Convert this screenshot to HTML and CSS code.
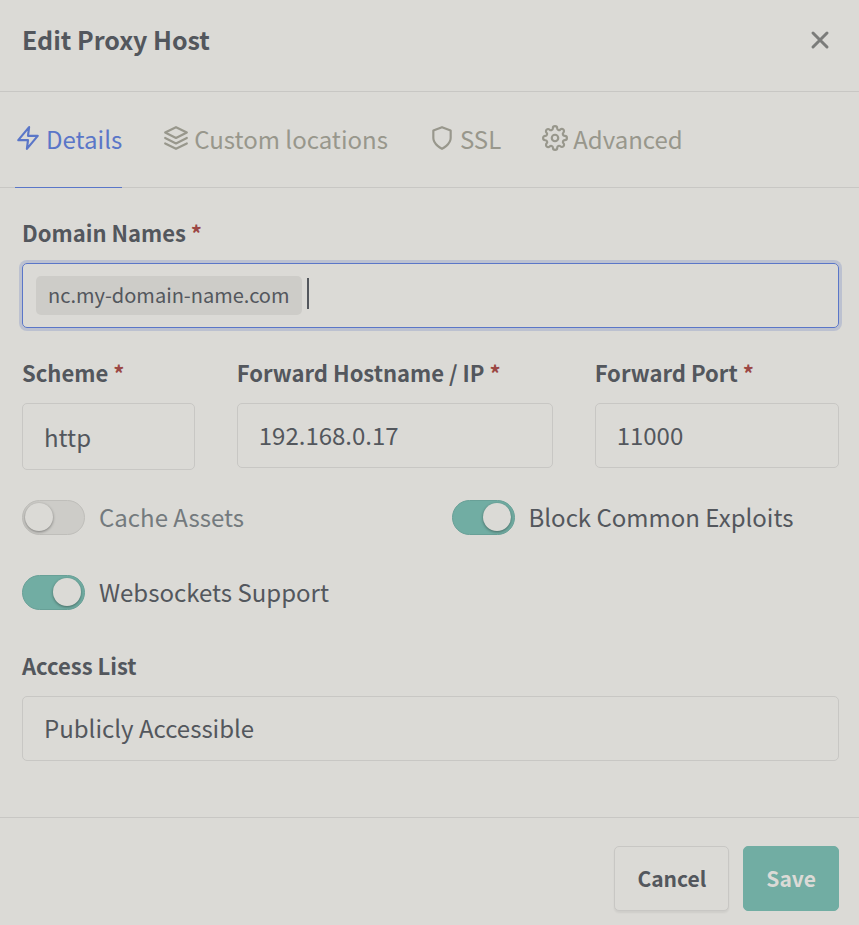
FILE: index.html
```html
<!DOCTYPE html>
<html lang="en">
<head>
  <meta charset="UTF-8">
  <meta name="viewport" content="width=device-width, initial-scale=1.0">
  <title>Edit Proxy Host</title>
  <link rel="stylesheet" href="styles.css">
</head>
<body>
  <form class="modal">
    <header class="modal-header">
      <h1 class="modal-title">Edit Proxy Host</h1>
      <button type="button" class="close" aria-label="Close">
        <svg viewBox="0 0 24 24"><path d="M5 5l14 14M19 5L5 19"/></svg>
      </button>
    </header>

    <nav class="tabs">
      <a href="#details" class="tab active">
        <svg class="icon" viewBox="0 0 24 24"><path d="M13 2L3 14h9l-1 8 10-12h-9l1-8z"/></svg>
        Details
      </a>
      <a href="#locations" class="tab">
        <svg class="icon" viewBox="0 0 24 24"><path d="M12 2L2 7l10 5 10-5-10-5z"/><path d="M2 17l10 5 10-5"/><path d="M2 12l10 5 10-5"/></svg>
        Custom locations
      </a>
      <a href="#ssl" class="tab">
        <svg class="icon" viewBox="0 0 24 24"><path d="M12 22s8-4 8-10V5l-8-3-8 3v7c0 6 8 10 8 10z"/></svg>
        SSL
      </a>
      <a href="#advanced" class="tab">
        <svg class="icon" viewBox="0 0 24 24"><circle cx="12" cy="12" r="3"/><path d="M19.4 15a1.65 1.65 0 0 0 .33 1.82l.06.06a2 2 0 0 1 0 2.83 2 2 0 0 1-2.83 0l-.06-.06a1.65 1.65 0 0 0-1.82-.33 1.65 1.65 0 0 0-1 1.51V21a2 2 0 0 1-2 2 2 2 0 0 1-2-2v-.09A1.65 1.65 0 0 0 9 19.4a1.65 1.65 0 0 0-1.82.33l-.06.06a2 2 0 0 1-2.83 0 2 2 0 0 1 0-2.83l.06-.06a1.65 1.65 0 0 0 .33-1.82 1.65 1.65 0 0 0-1.51-1H3a2 2 0 0 1-2-2 2 2 0 0 1 2-2h.09A1.65 1.65 0 0 0 4.6 9a1.65 1.65 0 0 0-.33-1.82l-.06-.06a2 2 0 0 1 0-2.83 2 2 0 0 1 2.83 0l.06.06a1.65 1.65 0 0 0 1.82.33H9a1.65 1.65 0 0 0 1-1.51V3a2 2 0 0 1 2-2 2 2 0 0 1 2 2v.09a1.65 1.65 0 0 0 1 1.51 1.65 1.65 0 0 0 1.82-.33l.06-.06a2 2 0 0 1 2.83 0 2 2 0 0 1 0 2.83l-.06.06a1.65 1.65 0 0 0-.33 1.82V9a1.65 1.65 0 0 0 1.51 1H21a2 2 0 0 1 2 2 2 2 0 0 1-2 2h-.09a1.65 1.65 0 0 0-1.51 1z"/></svg>
        Advanced
      </a>
    </nav>

    <div class="modal-body">
      <div class="field col-12">
        <label for="domains">Domain Names <span class="required">*</span></label>
        <div class="tag-box">
          <span class="tag">nc.my-domain-name.com</span>
          <input type="text" id="domains" class="tag-input">
        </div>
      </div>

      <div class="field col-3">
        <label for="scheme">Scheme <span class="required">*</span></label>
        <select id="scheme" class="control control-tall">
          <option>http</option>
          <option>https</option>
        </select>
      </div>
      <div class="field col-5">
        <label for="host">Forward Hostname / IP <span class="required">*</span></label>
        <input type="text" id="host" class="control" value="192.168.0.17">
      </div>
      <div class="field col-4">
        <label for="port">Forward Port <span class="required">*</span></label>
        <input type="text" id="port" class="control" value="11000">
      </div>

      <div class="switches col-12">
        <label class="switch">
          <input type="checkbox">
          <span>Cache Assets</span>
        </label>
        <label class="switch">
          <input type="checkbox" checked>
          <span>Block Common Exploits</span>
        </label>
        <label class="switch">
          <input type="checkbox" checked>
          <span>Websockets Support</span>
        </label>
      </div>

      <div class="field col-12">
        <label for="access">Access List</label>
        <select id="access" class="control">
          <option>Publicly Accessible</option>
        </select>
      </div>
    </div>

    <footer class="modal-footer">
      <button type="button" class="btn btn-secondary">Cancel</button>
      <button type="submit" class="btn btn-success">Save</button>
    </footer>
  </form>
</body>
</html>
```
FILE: styles.css
```css
:root {
  --bg: #dbdad6;
  --text: #53575d;
  --muted: #747a7e;
  --border: #c8c7c4;
  --blue: #5a76c8;
  --green: #71ada3;
  --tab: #98978c;
}

* {
  box-sizing: border-box;
  margin: 0;
  padding: 0;
}

body {
  background: var(--bg);
  color: var(--text);
  font-family: "Noto Sans CJK SC", "Noto Sans", sans-serif;
  font-size: 24px;
  line-height: 32px;
}

input,
select,
button {
  font: inherit;
  color: inherit;
}

.modal-header {
  display: flex;
  align-items: center;
  justify-content: space-between;
  padding: 23px 27px 36px 22px;
  border-bottom: 1px solid var(--border);
}

.modal-title {
  font-size: 25px;
  font-weight: 700;
}

.close {
  width: 24px;
  height: 24px;
  border: 0;
  background: none;
  color: #7b7c7a;
  cursor: pointer;
}

.close svg {
  display: block;
  width: 24px;
  height: 26px;
  fill: none;
  stroke: currentColor;
  stroke-width: 3;
  stroke-linecap: round;
}

.tabs {
  display: flex;
  gap: 41px;
  padding: 0 15px;
  border-bottom: 1px solid var(--border);
}

.tab {
  display: flex;
  align-items: center;
  gap: 5px;
  padding: 31px 0 32px;
  margin-bottom: -1px;
  border-bottom: 1px solid transparent;
  color: var(--tab);
  text-decoration: none;
}

.tab.active {
  color: var(--blue);
  border-color: var(--blue);
}

.icon {
  width: 26px;
  height: 26px;
  margin-bottom: 3px;
  fill: none;
  stroke: currentColor;
  stroke-width: 2;
  stroke-linecap: round;
  stroke-linejoin: round;
}

.modal-body {
  display: grid;
  grid-template-columns: repeat(12, 1fr);
  align-items: start;
  gap: 28px 42px;
  padding: 28px 20px 56px 22px;
}

.col-3 { grid-column: span 3; }
.col-4 { grid-column: span 4; }
.col-5 { grid-column: span 5; }
.col-12 { grid-column: span 12; }

.field label {
  display: block;
  margin-bottom: 15px;
  font-size: 22px;
  font-weight: 700;
  white-space: nowrap;
}

.required {
  color: #9b4744;
}

.control {
  display: block;
  width: 100%;
  height: 65px;
  padding: 0 21px 2px;
  border: 1px solid var(--border);
  border-radius: 5px;
  background: transparent;
  appearance: none;
  outline: 0;
}

.control-tall {
  height: 67px;
  padding-bottom: 0;
}

.tag-box {
  display: flex;
  align-items: center;
  gap: 5px;
  padding: 12px 13px;
  border: 1px solid var(--blue);
  border-radius: 5px;
  box-shadow: 0 0 0 3px #bcc1d0;
}

.tag {
  padding: 3px 12px 4px;
  border-radius: 5px;
  background: #cdccc8;
  font-size: 20px;
}

/* left border stands in for the caret */
.tag-input {
  flex: 1;
  min-width: 0;
  height: 31px;
  margin-bottom: 5px;
  border: 0;
  border-left: 2px solid var(--text);
  background: transparent;
  outline: 0;
}

.switches {
  display: grid;
  grid-template-columns: 1fr 1fr;
  gap: 40px 42px;
  margin: 2px 0 11px;
}

.switch {
  display: flex;
  align-items: center;
  gap: 14px;
  height: 35px;
  color: var(--muted);
  cursor: pointer;
}

.switch span {
  padding-bottom: 2px;
}

.switch:has(:checked) {
  color: var(--text);
}

.switch input {
  display: flex;
  align-items: center;
  width: 63px;
  height: 35px;
  padding: 0 2px 1px;
  border: 1px solid #bfbeba;
  border-radius: 18px;
  background: #cdccc8;
  appearance: none;
}

.switch input::before {
  content: "";
  width: 28px;
  height: 28px;
  border-radius: 50%;
  background: var(--bg);
  box-shadow: 0 1px 3px rgba(0, 0, 0, 0.4);
}

.switch input:checked {
  justify-content: flex-end;
  padding-right: 3px;
  border-color: #68a097;
  background: var(--green);
}

.modal-footer {
  display: flex;
  justify-content: flex-end;
  gap: 14px;
  padding: 28px 20px 14px;
  border-top: 1px solid var(--border);
}

.btn {
  height: 65px;
  padding: 0 22px 2px;
  border: 1px solid var(--border);
  border-radius: 5px;
  font-size: 21px;
  font-weight: 700;
  cursor: pointer;
}

.btn-secondary {
  background: var(--bg);
  box-shadow: 0 2px 2px rgba(0, 0, 0, 0.06);
}

.btn-success {
  border-color: var(--green);
  background: var(--green);
  color: var(--bg);
}
```
